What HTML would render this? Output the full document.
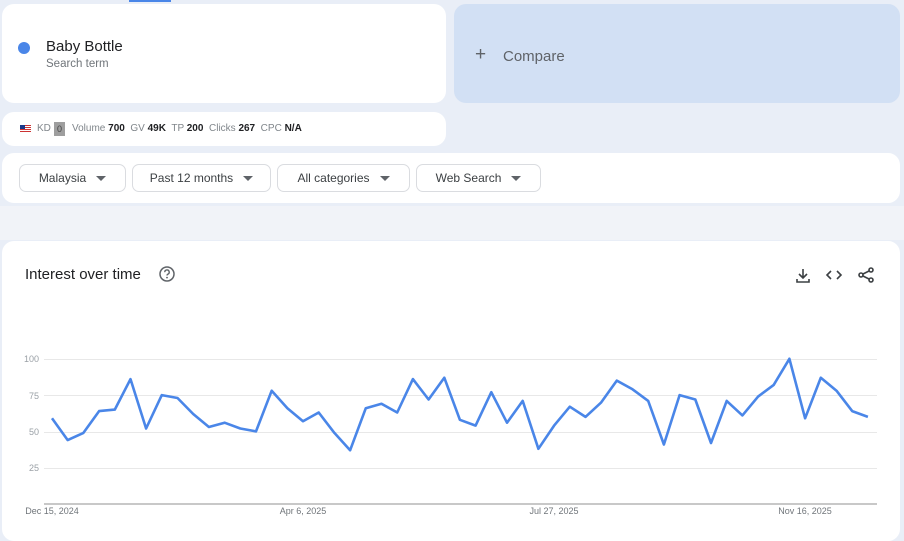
<!DOCTYPE html>
<html><head><meta charset="utf-8"><style>
*{box-sizing:border-box;margin:0;padding:0}
body{width:904px;height:528px;overflow:hidden;background:#e9eef7;font-family:"Liberation Sans",sans-serif;position:relative;color:#202124}
.card{position:absolute;background:#fff;border-radius:12px}
.btn{position:absolute;top:164px;height:28px;border:1px solid #dadce0;border-radius:7px;font-size:12px;color:#3c4043;display:flex;align-items:center;justify-content:center;gap:10px;background:#fff}
.tri{width:0;height:0;border-left:5px solid transparent;border-right:5px solid transparent;border-top:5px solid #5f6368}
.m{font-size:10px;color:#80868b;position:absolute;top:123px}
.m b{color:#202124}
</style></head><body>
<div style="position:absolute;left:129px;top:0;width:42px;height:2px;background:#4a86e8"></div>
<div class="card" style="left:2px;top:4px;width:444px;height:99px"></div>
<div style="position:absolute;left:18px;top:42px;width:12px;height:12px;border-radius:50%;background:#4a86e8"></div>
<div style="position:absolute;left:46px;top:38px;font-size:15px">Baby Bottle</div>
<div style="position:absolute;left:46px;top:58px;font-size:11.5px;color:#70757a">Search term</div>
<div class="card" style="left:454px;top:4px;width:446px;height:99px;background:#d2e0f4"></div>
<div style="position:absolute;left:475px;top:44px;font-size:19px;color:#5f6368;font-weight:300">+</div>
<div style="position:absolute;left:503px;top:48px;font-size:15px;color:#5f6368">Compare</div>
<div class="card" style="left:2px;top:112px;width:444px;height:34px"></div>
<div style="position:absolute;left:20px;top:125px;width:11px;height:7px;background:linear-gradient(#c33 0,#c33 1px,#fff 1px,#fff 2px,#c33 2px,#c33 3px,#fff 3px,#fff 4px,#c33 4px,#c33 5px,#fff 5px,#fff 6px,#c33 6px)"><div style="width:5px;height:4px;background:#1a3a8a"></div></div>
<div class="m" style="left:37px">KD</div>
<div style="position:absolute;left:54px;top:122px;width:11px;height:14px;background:#9e9e9e;color:#444;font-size:9px;text-align:center;line-height:14px">0</div>
<div class="m" style="left:72px">Volume <b>700</b>&nbsp; GV <b>49K</b>&nbsp; TP <b>200</b>&nbsp; Clicks <b>267</b>&nbsp; CPC <b>N/A</b></div>
<div class="card" style="left:2px;top:153px;width:898px;height:50px"></div>
<div class="btn" style="left:19px;width:107px">Malaysia<span class="tri"></span></div>
<div class="btn" style="left:132px;width:139px">Past 12 months<span class="tri"></span></div>
<div class="btn" style="left:277px;width:133px">All categories<span class="tri"></span></div>
<div class="btn" style="left:416px;width:125px">Web Search<span class="tri"></span></div>
<div style="position:absolute;left:0;top:206px;width:904px;height:34px;background:#f1f3f8"></div>
<div class="card" style="left:2px;top:241px;width:898px;height:300px"></div>
<div style="position:absolute;left:25px;top:266px;font-size:15px">Interest over time</div>
<svg style="position:absolute;left:158px;top:265px" width="18" height="18" viewBox="0 0 18 18"><circle cx="9" cy="9" r="7" fill="none" stroke="#5f6368" stroke-width="1.5"/><path d="M6.8 7.2a2.2 2.2 0 1 1 3 2c-.6.3-.8.7-.8 1.3" fill="none" stroke="#5f6368" stroke-width="1.4"/><circle cx="9" cy="12.6" r=".9" fill="#5f6368"/></svg>
<svg style="position:absolute;left:794px;top:266px" width="84" height="18" viewBox="0 0 84 18"><g fill="none" stroke="#3c4043" stroke-width="1.6"><path d="M9 3v9M5 8l4 4 4-4M3 13v3h12v-3"/><path d="M37 5l-4 4 4 4M43 5l4 4-4 4"/><circle cx="77" cy="4" r="2"/><circle cx="67" cy="9" r="2"/><circle cx="77" cy="14" r="2"/><path d="M69 8l6-3M69 10l6 3"/></g></svg>
<svg style="position:absolute;left:0;top:340px" width="904" height="188" viewBox="0 340 904 188">
<g stroke="#e8e8e8" stroke-width="1"><line x1="44" y1="359.5" x2="877" y2="359.5"/><line x1="44" y1="395.5" x2="877" y2="395.5"/><line x1="44" y1="432.5" x2="877" y2="432.5"/><line x1="44" y1="468.5" x2="877" y2="468.5"/></g>
<line x1="44" y1="504" x2="877" y2="504" stroke="#c8c8c8" stroke-width="2"/>
<g font-size="9" fill="#9aa0a6" font-family="Liberation Sans,sans-serif" text-anchor="end"><text x="39" y="362">100</text><text x="39" y="399">75</text><text x="39" y="435">50</text><text x="39" y="471">25</text></g>
<g font-size="9" fill="#70757a" font-family="Liberation Sans,sans-serif" text-anchor="middle"><text x="52" y="514">Dec 15, 2024</text><text x="303" y="514">Apr 6, 2025</text><text x="554" y="514">Jul 27, 2025</text><text x="805" y="514">Nov 16, 2025</text></g>
<polyline fill="none" stroke="#4a86e8" stroke-width="2.6" stroke-linejoin="round" points="52,418.3 67.7,440.1 83.4,432.9 99.1,411.1 114.8,409.6 130.5,379.1 146.1,428.5 161.8,395.1 177.5,398 193.2,414 208.9,427 224.6,422.7 240.3,428.5 256,431.4 271.7,390.7 287.4,408.2 303,421.2 318.7,412.5 334.4,432.9 350.1,450.3 365.8,408.2 381.5,403.8 397.2,412.5 412.9,379.1 428.6,399.5 444.3,377.7 459.9,419.8 475.6,425.6 491.3,392.2 507,422.7 522.7,400.9 538.4,448.8 554.1,425.6 569.8,406.7 585.5,416.9 601.2,402.4 616.8,380.6 632.5,389.3 648.2,400.9 663.9,444.5 679.6,395.1 695.3,399.5 711,443 726.7,400.9 742.4,415.4 758.1,396.6 773.7,384.9 789.4,358.8 805.1,418.3 820.8,377.7 836.5,390.7 852.2,411.1 867.9,416.9"/>
</svg>
</body></html>
